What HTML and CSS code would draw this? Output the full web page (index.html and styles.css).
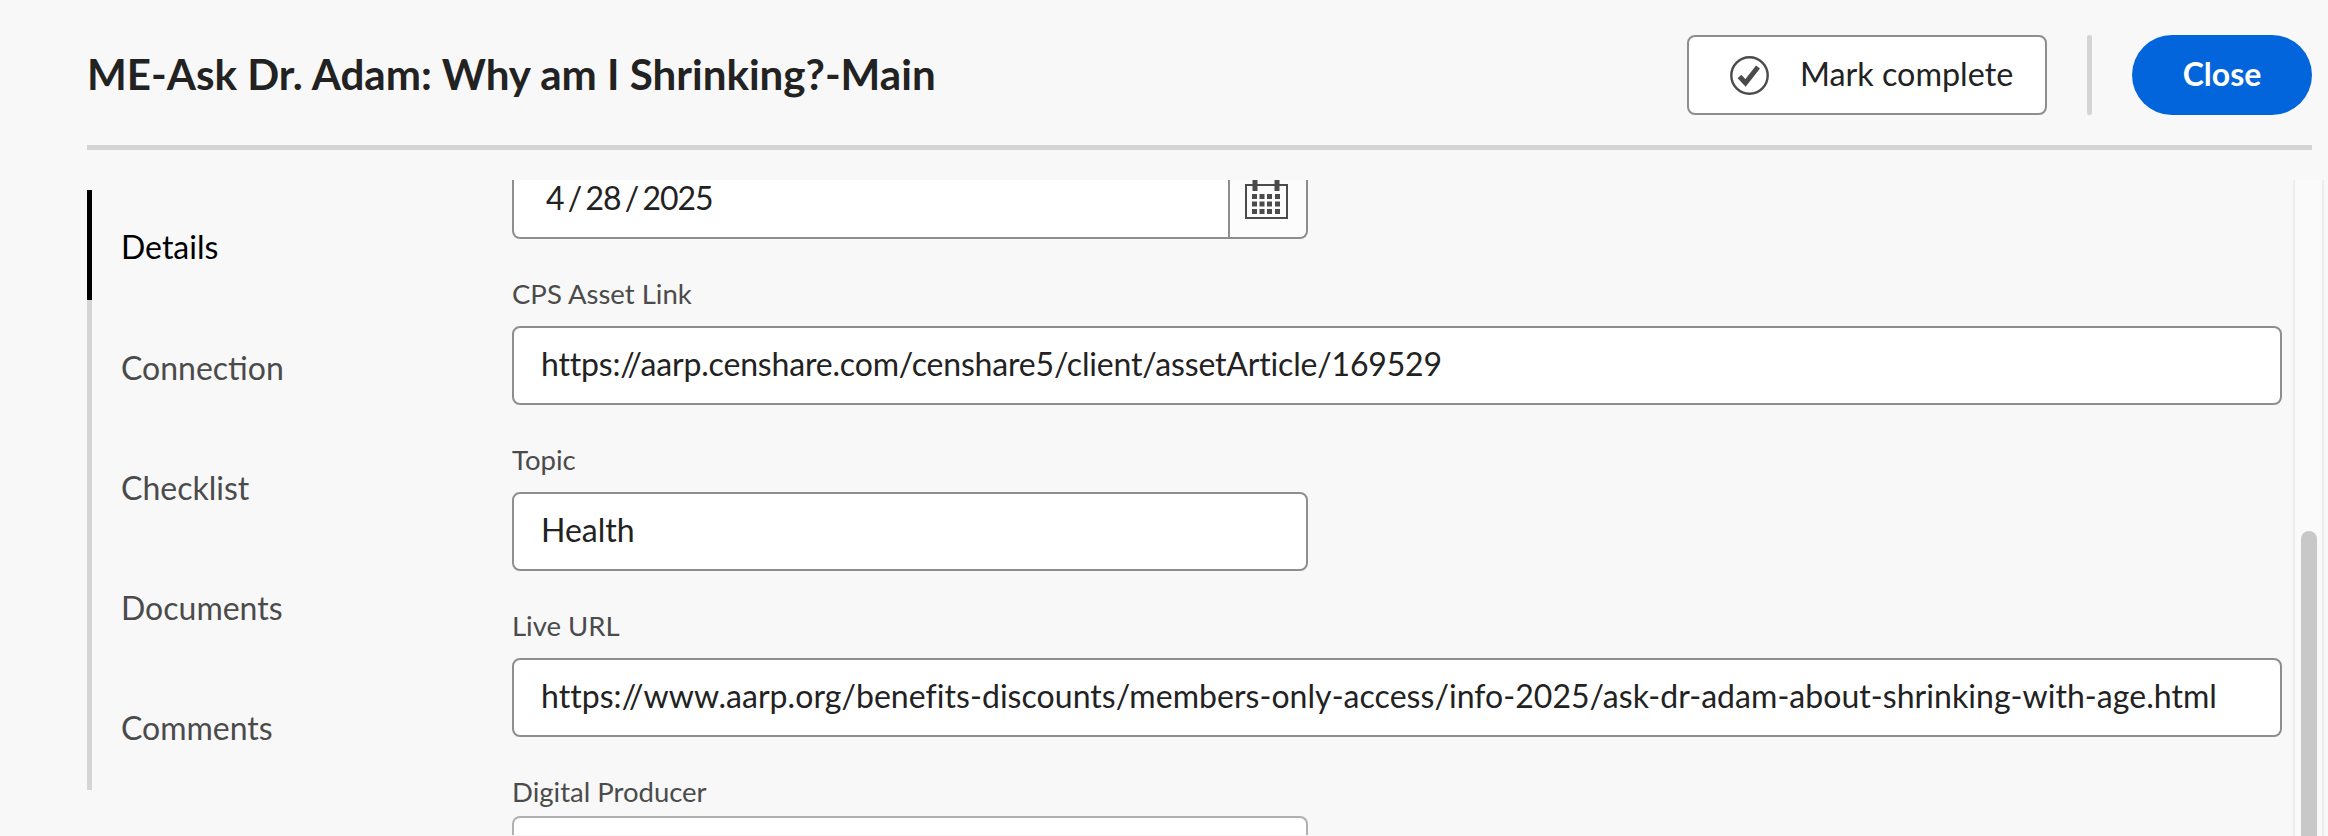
FILE: index.html
```html
<!DOCTYPE html>
<html lang="en">
<head>
    <meta charset="UTF-8">
    <title>ME-Ask Dr. Adam: Why am I Shrinking?-Main</title>
    <link rel="stylesheet" href="styles.css">
</head>
<body>
    <header class="top-bar">
        <h1 class="title">ME-Ask Dr. Adam: Why am I Shrinking?-Main</h1>
        <div class="actions">
            <button class="btn-complete">
                <svg class="check-icon" viewBox="0 0 39 39">
                    <circle cx="19.5" cy="19.5" r="18.2" fill="none" stroke="#4b4b4b" stroke-width="2.4"/>
                    <path d="M9.500 20.500l6 6.500L28 11" fill="none" stroke="#4b4b4b" stroke-width="5"/>
                </svg>
                <span>Mark complete</span>
            </button>
            <div class="divider"></div>
            <button class="btn-close">Close</button>
        </div>
    </header>
    <div class="main">
        <nav class="tabs">
            <a class="tab active">Details</a>
            <a class="tab">Connection</a>
            <a class="tab">Checklist</a>
            <a class="tab">Documents</a>
            <a class="tab">Comments</a>
        </nav>
        <div class="panel">
            <form class="form">
                <div class="date-field">
                    <div class="date-value">4 / 28 / 2025</div>
                    <div class="date-button">
                        <svg class="cal-icon" viewBox="0 0 43 39">
                            <rect x="1" y="5" width="41" height="33" fill="none" stroke="#4b4b4b" stroke-width="2"/>
                            <path d="M10 0v11M32 0v11" stroke="#4b4b4b" stroke-width="5"/>
                            <path d="M7 14h5v5H7zM14.500 14h5v5h-5zM22 14h5v5h-5zM30 14h5v5h-5zM7 21.500h5v5H7zM14.500 21.500h5v5h-5zM22 21.500h5v5h-5zM30 21.500h5v5h-5zM7 29h5v5H7zM14.500 29h5v5h-5zM22 29h5v5h-5zM30 29h5v5h-5z" fill="#4b4b4b"/>
                        </svg>
                    </div>
                </div>
                <div class="field">
                    <label class="label">CPS Asset Link</label>
                    <div class="input tight">https://aarp.censhare.com/censhare5/client/assetArticle/169529</div>
                </div>
                <div class="field short">
                    <label class="label">Topic</label>
                    <div class="input">Health</div>
                </div>
                <div class="field">
                    <label class="label">Live URL</label>
                    <div class="input wide">https://www.aarp.org/benefits-discounts/members-only-access/info-2025/ask-dr-adam-about-shrinking-with-age.html</div>
                </div>
                <div class="field short last">
                    <label class="label">Digital Producer</label>
                    <div class="input"></div>
                </div>
            </form>
            <div class="scroll-track"><div class="scroll-thumb"></div></div>
        </div>
    </div>
</body>
</html>
```

FILE: styles.css
```css
body {
    margin: 0;
    height: 836px;
    overflow: hidden;
    background-color: #f8f8f8;
    color: #222222;
    font-family: Lato, "Open Sans", sans-serif;
}
.top-bar {
    display: flex;
    align-items: center;
    justify-content: space-between;
    box-sizing: border-box;
    height: 150px;
    margin: 0 16px 0 87px;
    padding-top: 5px;
    border-bottom: 5px solid #d5d5d5;
}
.title {
    margin: 0 0 3px;
    font-size: 42.1px;
    font-weight: 700;
}
.actions {
    display: flex;
    align-items: center;
}
.btn-complete {
    display: flex;
    align-items: center;
    box-sizing: border-box;
    width: 360px;
    height: 80px;
    padding: 0 0 0 41px;
    background: #ffffff;
    border: 2px solid #8e8e8e;
    border-radius: 8px;
    color: #222222;
    font: inherit;
    font-size: 32.3px;
}
.btn-complete span {
    padding-bottom: 3px;
}
.check-icon {
    width: 39px;
    height: 39px;
    margin-right: 31px;
}
.divider {
    width: 5px;
    height: 80px;
    margin: 0 40px;
    background: #d5d5d5;
    border-radius: 2px;
}
.btn-close {
    width: 180px;
    height: 80px;
    padding: 0 0 4px;
    background: #0265dc;
    border: none;
    border-radius: 40px;
    color: #ffffff;
    font: inherit;
    font-size: 32px;
    font-weight: 700;
}
.main {
    display: flex;
    margin: 30px 0 0 87px;
    height: 656px;
}
.tabs {
    display: flex;
    flex-direction: column;
    width: 425px;
    height: 600px;
    margin-top: 10px;
    background: linear-gradient(#d5d5d5, #d5d5d5) no-repeat left top / 5px 100%;
}
.tab {
    display: flex;
    align-items: center;
    height: 120px;
    padding-left: 34px;
    color: #4b4b4b;
    font-size: 32px;
}
.tab.active {
    box-sizing: border-box;
    height: 110px;
    margin-bottom: 7px;
    padding-top: 3px;
    color: #000000;
    background: linear-gradient(#000000, #000000) no-repeat left top / 5px 100%;
}
.panel {
    display: flex;
    flex: 1;
}
.form {
    width: 1770px;
    flex-shrink: 0;
}
.date-field {
    display: flex;
    box-sizing: border-box;
    width: 796px;
    height: 59px;
    border: 2px solid #8e8e8e;
    border-top: none;
    border-radius: 0 0 8px 8px;
    background: #ffffff;
}
.date-value {
    flex: 1;
    padding-left: 32px;
    font-size: 32px;
    line-height: 36px;
    letter-spacing: -1px;
    word-spacing: -3px;
}
.date-button {
    width: 76px;
    border-left: 2px solid #8e8e8e;
    background: #fcfcfc;
    border-radius: 0 0 8px 0;
}
.cal-icon {
    display: block;
    width: 43px;
    height: 39px;
    margin-left: 15px;
}
.field {
    margin-top: 38px;
}
.field.short {
    width: 796px;
}
.label {
    display: block;
    height: 49px;
    color: #4b4b4b;
    font-size: 27.5px;
    line-height: 33px;
}
.last .label {
    height: 41px;
}
.input {
    box-sizing: border-box;
    height: 79px;
    padding-left: 27px;
    background: #ffffff;
    border: 2px solid #8e8e8e;
    border-radius: 8px;
    font-size: 32px;
    line-height: 71px;
}
.input.tight {
    letter-spacing: -0.17px;
}
.input.wide {
    letter-spacing: 0.05px;
}
.last .input {
    height: 19px;
    border-color: #b0b0b0;
    border-bottom: none;
    border-radius: 8px 8px 0 0;
}
.scroll-track {
    box-sizing: border-box;
    flex-shrink: 0;
    width: 31px;
    height: 100%;
    margin-left: 11px;
    padding-top: 351px;
    padding-left: 6px;
    border-left: 2px solid #ececec;
    border-right: 2px solid #ececec;
    background: #fafafa;
}
.scroll-thumb {
    width: 16px;
    height: 305px;
    background: #c8c8c8;
    border-radius: 8px 8px 0 0;
}
```
